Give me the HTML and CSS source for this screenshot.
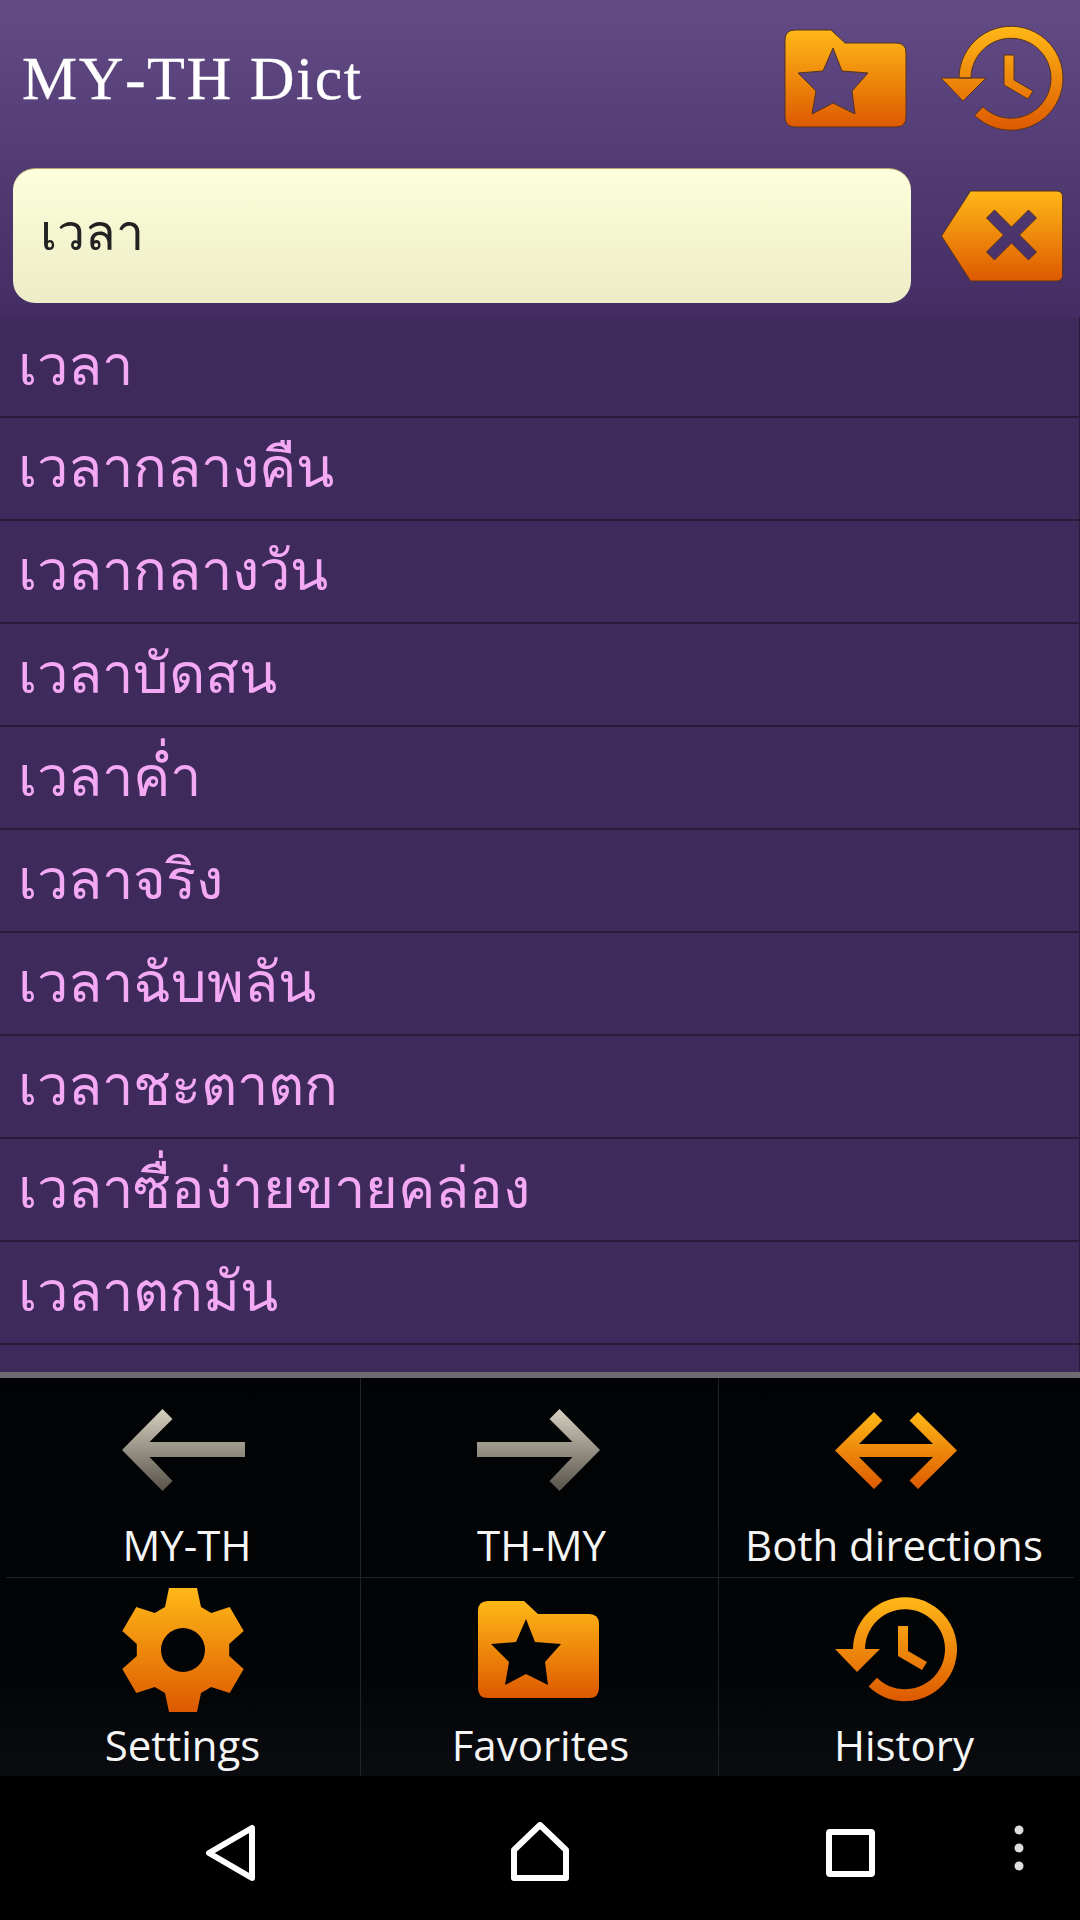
FILE: index.html
```html
<!DOCTYPE html>
<html lang="th">
<head>
<meta charset="utf-8">
<title>MY-TH Dict</title>
<link rel="stylesheet" href="styles.css">
</head>
<body>
<svg class="defs" width="0" height="0" aria-hidden="true">
  <defs>
    <linearGradient id="orange" x1="0" y1="0" x2="0" y2="1">
      <stop offset="0" stop-color="#ffb817"/>
      <stop offset="1" stop-color="#dd5900"/>
    </linearGradient>
    <linearGradient id="stone" x1="0" y1="0" x2="0" y2="1">
      <stop offset="0" stop-color="#d6d0c0"/>
      <stop offset="1" stop-color="#57524a"/>
    </linearGradient>
    <symbol id="i-folder" viewBox="-1 -1 123 99">
      <path fill="url(#orange)" fill-rule="evenodd" d="M10 0H46L60 13H111Q121 13 121 23V87Q121 97 111 97H10Q0 97 0 87V10Q0 0 10 0ZM48 18L38 41L13 43L31 61L27 84L48 73L70 84L67 61L83 43L57 41Z"/>
    </symbol>
    <symbol id="i-history" viewBox="-1 -1 124 107">
      <path fill="url(#orange)" d="M18 52A52 52 0 1 1 33.6 89.4L42 80.8A40 40 0 1 0 30 52ZM0 52H45L22 75ZM63 29H73V54L92 65L87 73L63 59Z"/>
    </symbol>
    <symbol id="i-clear" viewBox="-1 -1 123 92">
      <path fill="url(#orange)" fill-rule="evenodd" d="M29 0H115Q121 0 121 6V84Q121 90 115 90H29L0 45ZM45 27L53 19L70 36L87 19L95 27L78 44L95 61L87 69L70 52L53 69L45 61L62 44Z"/>
    </symbol>
    <symbol id="i-left" viewBox="0 0 123 82">
      <path fill="url(#stone)" d="M0 41L40.5 0L50.5 10L27.5 33H123V48H27.5L50.5 72L40.5 82Z"/>
    </symbol>
    <symbol id="i-right" viewBox="0 0 123 82">
      <path fill="url(#stone)" d="M123 41L82.5 0L72.5 10L95.5 33H0V48H95.5L72.5 72L82.5 82Z"/>
    </symbol>
    <symbol id="i-both" viewBox="0 0 122 77">
      <path fill="url(#orange)" d="M0 38.5L39 0L47.5 8.5L24 32H98L74.5 8.5L83 0L122 38.5L83 77L74.5 68.5L98 45H24L47.5 68.5L39 77Z"/>
    </symbol>
    <symbol id="i-gear" viewBox="-62 -62 124 124">
      <path fill="url(#orange)" fill-rule="evenodd" d="M-18 -43L-14 -62H14L18 -43L28.2 -37.1L46.7 -43.1L60.7 -18.9L46.2 -5.9V5.9L60.7 18.9L46.7 43.1L28.2 37.1L18 43L14 62H-14L-18 43L-28.2 37.1L-46.7 43.1L-60.7 18.9L-46.2 5.9V-5.9L-60.7 -18.9L-46.7 -43.1L-28.2 -37.1ZM22 0A22 22 0 1 0 -22 0A22 22 0 1 0 22 0Z"/>
    </symbol>
  </defs>
</svg>

<div class="screen">
  <header class="top">
    <div class="title-row">
      <h1 class="title">MY-TH Dict</h1>
      <div class="top-actions">
        <svg class="icon ic-folder-top" aria-label="Favorites"><use href="#i-folder"/></svg>
        <svg class="icon ic-history-top" aria-label="History"><use href="#i-history"/></svg>
      </div>
    </div>
    <div class="search-row">
      <div class="search-field">เวลา</div>
      <svg class="icon ic-clear" aria-label="Clear"><use href="#i-clear"/></svg>
    </div>
  </header>

  <ul class="results">
    <li class="result">เวลา</li>
    <li class="result">เวลากลางคืน</li>
    <li class="result">เวลากลางวัน</li>
    <li class="result">เวลาบัดสน</li>
    <li class="result">เวลาค่ำ</li>
    <li class="result">เวลาจริง</li>
    <li class="result">เวลาฉับพลัน</li>
    <li class="result">เวลาชะตาตก</li>
    <li class="result">เวลาซื่อง่ายขายคล่อง</li>
    <li class="result">เวลาตกมัน</li>
    <li class="result"></li>
  </ul>

  <section class="panel">
    <div class="panel-row">
      <div class="cell">
        <div class="cell-icon icon-c1"><svg class="ic-arrow"><use href="#i-left"/></svg></div>
        <div class="label lb-myth">MY-TH</div>
      </div>
      <div class="cell">
        <div class="cell-icon icon-c2"><svg class="ic-arrow"><use href="#i-right"/></svg></div>
        <div class="label lb-thmy">TH-MY</div>
      </div>
      <div class="cell cell-last">
        <div class="cell-icon icon-c3"><svg class="ic-both"><use href="#i-both"/></svg></div>
        <div class="label lb-both">Both directions</div>
      </div>
    </div>
    <div class="panel-rule"></div>
    <div class="panel-row">
      <div class="cell">
        <div class="cell-icon icon-c1"><svg class="ic-gear"><use href="#i-gear"/></svg></div>
        <div class="label lb-settings">Settings</div>
      </div>
      <div class="cell">
        <div class="cell-icon icon-c2"><svg class="ic-folder"><use href="#i-folder"/></svg></div>
        <div class="label lb-fav">Favorites</div>
      </div>
      <div class="cell cell-last">
        <div class="cell-icon icon-c3"><svg class="ic-history"><use href="#i-history"/></svg></div>
        <div class="label lb-history">History</div>
      </div>
    </div>
  </section>

  <nav class="navbar">
    <svg class="nav-back" viewBox="0 0 50 60"><path d="M47 6V56L4 31Z"/></svg>
    <svg class="nav-home" viewBox="0 0 58 60"><path d="M3 28L29 3L55 28V56H3Z"/></svg>
    <svg class="nav-recent" viewBox="0 0 49 48"><rect x="3" y="3" width="43" height="42" rx="1"/></svg>
    <svg class="nav-more" viewBox="0 0 10 46"><circle cx="5" cy="5" r="4.5"/><circle cx="5" cy="23" r="4.5"/><circle cx="5" cy="41" r="4.5"/></svg>
  </nav>
</div>
</body>
</html>
```

FILE: styles.css
```css
* { box-sizing: border-box; }
html, body { margin: 0; padding: 0; background: #000; }
.defs { position: absolute; }
.screen {
  width: 1080px;
  height: 1920px;
  display: flex;
  flex-direction: column;
  overflow: hidden;
  font-family: "Open Sans", sans-serif;
}

/* header */
.top {
  height: 317px;
  flex: none;
  background: linear-gradient(#634b86, #432d63);
}
.title-row {
  height: 156px;
  margin-bottom: 12px;
  display: flex;
  align-items: center;
  justify-content: space-between;
  padding: 0 16px 0 22px;
}
.title {
  margin: 0;
  font-family: "Liberation Serif", serif;
  font-weight: 400;
  font-size: 62px;
  font-kerning: none;
  letter-spacing: 1.5px;
  color: #fff;
  -webkit-text-stroke: 0.3px #fff;
}
.top-actions { display: flex; align-items: center; gap: 33px; }
.icon { display: block; flex: none; stroke: #56331f; stroke-width: 1; }
.ic-folder-top { width: 123px; height: 99px; }
.ic-history-top { width: 124px; height: 107px; }
.search-row {
  display: flex;
  align-items: center;
  justify-content: space-between;
  padding: 0 16px 0 13px;
}
.search-field {
  width: 898px;
  height: 135px;
  padding: 0 0 7px 27px;
  display: flex;
  align-items: center;
  border-radius: 22px;
  background: linear-gradient(#fdfedb, #ecedc7);
  border-top: 1px solid #b5a86a;
  font-family: "Noto Sans", "Open Sans", sans-serif;
  font-size: 50px;
  color: #222;
}
.ic-clear { width: 124px; height: 92px; }

/* result list */
.results {
  list-style: none;
  margin: 0;
  padding: 0;
  flex: 1;
  overflow: hidden;
  background: #3f2a5c;
  border-right: 1px solid #2a1b3d;
}
.result {
  height: 103px;
  padding: 0 0 2px 18px;
  display: flex;
  align-items: center;
  border-bottom: 2px solid #2a1b3a;
  font-family: "Noto Sans", "Open Sans", sans-serif;
  font-size: 56px;
  color: #f4a9f5;
}
.result:first-child { height: 101px; }

/* bottom panel */
.panel {
  flex: none;
  height: 404px;
  border-top: 6px solid #6c6c72;
  background: linear-gradient(#020304, #030405 75%, #0a0c10);
  display: flex;
  flex-direction: column;
}
.panel-row { flex: 1; display: flex; }
.panel-rule { height: 1px; margin: 0 6px; background: #222326; flex: none; }
.cell {
  width: 361px;
  padding-top: 10px;
  display: flex;
  flex-direction: column;
  align-items: center;
  border-right: 1px solid #222326;
}
.cell:nth-child(2) { width: 358px; }
.cell-last { width: 361px; border-right: 0; }
.cell-icon { height: 124px; display: flex; align-items: center; }
.cell-icon svg { display: block; }
.icon-c1 { margin-left: 6px; }
.icon-c2 { margin-left: -2px; }
.icon-c3 { margin-left: -7px; }
.ic-arrow { width: 123px; height: 82px; }
.ic-both { width: 122px; height: 77px; }
.ic-gear { width: 124px; height: 124px; }
.ic-folder { width: 123px; height: 99px; }
.ic-history { width: 124px; height: 107px; }
.label {
  margin-top: 6px;
  font-size: 42px;
  line-height: 54px;
  color: #f5f5f5;
  white-space: nowrap;
}
.lb-myth { margin-left: 14px; }
.lb-thmy { margin-left: 4px; }
.lb-both { margin-left: -11px; }
.lb-settings { margin-left: 5px; }
.lb-fav { margin-left: 2px; }
.lb-history { margin-left: 9px; }

/* system navigation */
.navbar {
  flex: none;
  height: 144px;
  background: #000;
  display: flex;
  align-items: flex-start;
  padding: 46px 0 0 205px;
}
.navbar path, .navbar rect { fill: none; stroke: #fff; stroke-width: 6; stroke-linejoin: round; }
.nav-back { width: 50px; height: 60px; flex: none; }
.nav-home { width: 58px; height: 60px; flex: none; margin-left: 256px; }
.nav-recent { width: 49px; height: 48px; flex: none; margin: 7px 0 0 257px; }
.nav-more { width: 10px; height: 46px; flex: none; margin: 3px 0 0 139px; }
.nav-more circle { fill: #ddd; }
```
